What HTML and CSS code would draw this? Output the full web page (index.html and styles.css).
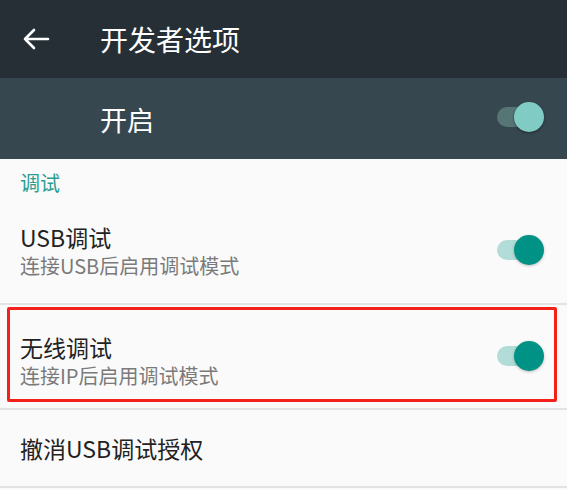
FILE: index.html
```html
<!DOCTYPE html>
<html lang="zh-CN">
<head>
<meta charset="utf-8">
<title>开发者选项</title>
<link rel="stylesheet" href="styles.css">
</head>
<body>
<header class="toolbar">
  <svg class="back" width="30" height="24" viewBox="0 0 30 24" aria-hidden="true">
    <path d="M4 12H27M13 3L4 12L13 21" fill="none" stroke="#ffffff" stroke-width="2.6" stroke-linecap="round" stroke-linejoin="round"/>
  </svg>
  <h1 class="toolbar-title">开发者选项</h1>
</header>
<section class="master">
  <span class="master-label">开启</span>
  <span class="switch switch-dark"></span>
</section>
<main class="list">
  <div class="section-label">调试</div>
  <div class="item item-usb">
    <div class="item-text">
      <div class="item-title">USB调试</div>
      <div class="item-sub">连接USB后启用调试模式</div>
    </div>
    <span class="switch"></span>
  </div>
  <div class="divider"></div>
  <div class="item item-wifi">
    <div class="item-text">
      <div class="item-title">无线调试</div>
      <div class="item-sub">连接IP后启用调试模式</div>
    </div>
    <span class="switch"></span>
    <span class="highlight"></span>
  </div>
  <div class="divider"></div>
  <div class="item item-single">
    <div class="item-title">撤消USB调试授权</div>
  </div>
  <div class="divider"></div>
</main>
</body>
</html>
```
FILE: styles.css
```css
html, body {
  margin: 0;
  padding: 0;
}
body {
  width: 567px;
  height: 490px;
  overflow: hidden;
  background: #fafafa;
  font-family: "Noto Sans CJK SC", "Noto Sans", sans-serif;
}
.toolbar {
  height: 78px;
  background: #252f35;
  display: flex;
  align-items: center;
  box-sizing: border-box;
  padding-left: 21px;
}
.back {
  display: block;
  margin-top: -1px;
}
.toolbar-title {
  margin: 0 0 0 49px;
  font-size: 28px;
  font-weight: 400;
  color: #ffffff;
  line-height: 34px;
}
.master {
  height: 81px;
  background: #37474f;
  display: flex;
  align-items: center;
  box-sizing: border-box;
  padding: 0 23px 0 100px;
}
.master-label {
  flex: 1;
  font-size: 27px;
  color: #ffffff;
  line-height: 34px;
  margin-top: 2px;
}
.switch {
  position: relative;
  width: 47px;
  height: 30px;
  flex: none;
}
.switch::before {
  content: "";
  position: absolute;
  left: 0;
  top: 5px;
  width: 38px;
  height: 20px;
  border-radius: 10px;
  background: #b2dcd8;
}
.switch::after {
  content: "";
  position: absolute;
  right: 0;
  top: 0;
  width: 30px;
  height: 30px;
  border-radius: 50%;
  background: #009385;
  box-shadow: 0 1px 3px rgba(0, 0, 0, 0.25);
}
.switch-dark {
  margin-top: -3px;
}
.switch-dark::before {
  background: #567575;
}
.switch-dark::after {
  background: #80cbc4;
  box-shadow: 0 1px 3px rgba(0, 0, 0, 0.4);
}
.list {
  display: flex;
  flex-direction: column;
}
.section-label {
  padding: 12px 20px 5px;
  font-size: 20px;
  line-height: 24px;
  color: #2a9d91;
}
.item {
  position: relative;
  display: flex;
  align-items: center;
  padding: 0 23px 0 20px;
}
.item-text {
  flex: 1;
  display: flex;
  flex-direction: column;
}
.item-title {
  font-size: 23px;
  line-height: 30px;
  color: #222222;
}
.item-sub {
  font-size: 20px;
  line-height: 28px;
  color: #7a7a7a;
}
.item-usb {
  height: 103px;
  padding-top: 22px;
  padding-bottom: 23px;
  box-sizing: border-box;
  align-items: flex-start;
}
.item-usb .switch {
  margin-top: 13px;
}
.item-wifi {
  height: 103px;
  padding-top: 27px;
  padding-bottom: 18px;
  box-sizing: border-box;
  align-items: flex-start;
}
.item-wifi .switch {
  margin-top: 9px;
}
.item-single {
  height: 76px;
}
.divider {
  height: 2px;
  background: #e3e3e3;
}
.highlight {
  position: absolute;
  left: 7px;
  right: 10px;
  top: 2px;
  bottom: 6px;
  border: 3px solid #f5201a;
  border-radius: 2px;
}
```
